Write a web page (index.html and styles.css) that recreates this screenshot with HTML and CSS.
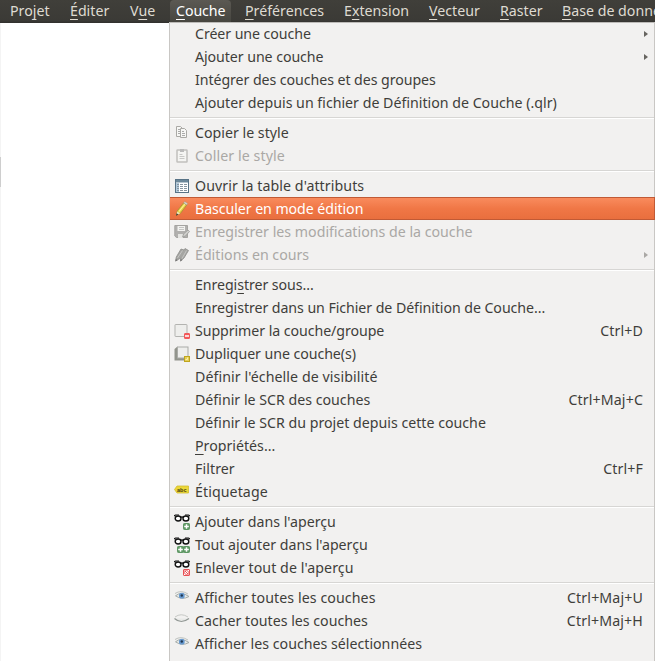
FILE: index.html
```
<!DOCTYPE html>
<html lang="fr">
<head>
<meta charset="utf-8">
<title>Couche</title>
<link rel="stylesheet" href="styles.css">
</head>
<body>
<svg class="defs" width="0" height="0">
  <defs>
    <symbol id="glasses" viewBox="0 0 16 16">
      <path d="M0 2 1.500 1H5M16 2 14.500 1H11" fill="none" stroke="#111" stroke-width="1.200"/>
      <ellipse cx="4.100" cy="4.500" rx="2.900" ry="2.500" fill="#fff" stroke="#111" stroke-width="1.400"/>
      <ellipse cx="11.900" cy="4.500" rx="2.900" ry="2.500" fill="#fff" stroke="#111" stroke-width="1.400"/>
      <path d="M6.500 3.500Q8 2.300 9.500 3.500" fill="none" stroke="#111" stroke-width="1.400"/>
    </symbol>
    <symbol id="plus" viewBox="0 0 7 7">
      <rect x=".5" y=".5" width="6" height="6" rx=".8" fill="#5f9864" stroke="#5c9762"/>
      <path d="M3.500 1.200v4.600M1.200 3.500h4.600" stroke="#fff" stroke-width="1.500"/>
    </symbol>
    <symbol id="eye" viewBox="0 0 16 16">
      <path d="M1.500 5.800Q7 1 15 6.500 8 10.500 1.500 5.800Z" fill="#e9ecea" stroke="#a4aaa7" stroke-width="1"/>
      <path d="M1 3.500Q7-.5 14 4" fill="none" stroke="#b7bbb8" stroke-width=".9"/>
      <circle cx="7.800" cy="5.700" r="2.900" fill="#6799cf"/>
      <circle cx="7.800" cy="5.500" r="1.200" fill="#20364f"/>
    </symbol>
  </defs>
</svg>
<nav class="menubar">
  <span class="tab t1">Pro<u>j</u>et</span><span class="tab t2"><u>É</u>diter</span><span class="tab t3">V<u>u</u>e</span><span class="tab t4 active tight"><u>C</u>ouche</span><span class="tab t5"><u>P</u>références</span><span class="tab t6">E<u>x</u>tension</span><span class="tab t7"><u>V</u>ecteur</span><span class="tab t8"><u>R</u>aster</span><span class="tab t9"><u>B</u>ase de données</span>
</nav>
<main class="content">
<div class="handle"></div>
<div class="menu">
  <div class="row tight"><i class="icon"></i><span class="label">Créer une couche</span><b class="arrow"></b></div>
  <div class="row tight"><i class="icon"></i><span class="label">Ajouter une couche</span><b class="arrow"></b></div>
  <div class="row tight"><i class="icon"></i><span class="label">Intégrer des couches et des groupes</span></div>
  <div class="row"><i class="icon"></i><span class="label">Ajouter depuis un fichier de Définition de Couche (.qlr)</span></div>
  <hr>
  <div class="row"><svg class="icon" viewBox="0 0 16 16"><path d="M2.500 1.500h4l2 2v8h-6z" fill="#f7f7f5" stroke="#aaa9a5"/><path d="M6.500 3.500h4l2 2v7h-6z" fill="#f7f7f5" stroke="#aaa9a5"/><path d="M4 4.500h2M4 6.500h2M4 8.500h2M8 6.500h2M8 8.500h3M8 10.500h3" stroke="#aaa"/></svg><span class="label">Copier le style</span></div>
  <div class="row disabled loose"><svg class="icon" viewBox="0 0 16 16"><rect x="3" y="2" width="10" height="12" rx=".5" fill="#f5f5f3" stroke="#c1c0bd" stroke-width="1.500"/><path d="M6 1h4v3H6z" fill="#bbb"/><path d="M5.500 6.500h3M5.500 8.500h5M5.500 10.500h5" stroke="#c8c8c6"/></svg><span class="label">Coller le style</span></div>
  <hr>
  <div class="row loose"><svg class="icon" viewBox="0 0 16 16"><rect x="1.500" y="1.500" width="13" height="13" fill="#fff" stroke="#587386"/><path d="M2 2h12v2.500H2z" fill="#6b8799"/><path d="M2 5h3v9H2z" fill="#b3cadb"/><path d="M3 6.500h2M6 6.500h3M10 6.500h3M3 8.500h2M6 8.500h3M10 8.500h3M3 10.500h2M6 10.500h3M10 10.500h3M3 12.500h2M6 12.500h3M10 12.500h3" stroke="#8795a0"/></svg><span class="label">Ouvrir la table d'attributs</span></div>
  <div class="row selected tight"><svg class="icon" viewBox="0 0 16 16"><path d="m2.500 14 .7-4L9.500 2l3.200 2L6.500 12.300z" fill="#e5cf42" stroke="#a78e34" stroke-width=".8"/><path d="m5 10.500 6-7.500" stroke="#fff09a" stroke-width="1.200"/><path d="m9.500 2 1.300-1.500 2.900 2-1 1.500z" fill="#d6d6ce" stroke="#a3937b" stroke-width=".5"/><path d="m2.500 14 .7-3.500 3 2z" fill="#eee3bf"/><path d="m2 14.800.6-2.500 1.700 1.200z" fill="#333"/></svg><span class="label">Basculer en mode édition</span></div>
  <div class="row disabled"><svg class="icon" viewBox="0 0 16 16"><path d="M.8 1.500h12.700v12H2.500L.8 12z" fill="#b1b0ae" stroke="#a5a4a1"/><path d="M3.500 2h7.500v5H3.500z" fill="#f2f2f0"/><path d="M4 10h5v4H4z" fill="#e5e5e2"/><path d="M5 3.500h5M5 5.500h5" stroke="#c5c5c3"/><path d="m8.500 13 1-3 4.500-4 1.500 1.500-4 4.500z" fill="#cececb" stroke="#969693" stroke-width=".7"/></svg><span class="label">Enregistrer les modifications de la couche</span></div>
  <div class="row disabled"><svg class="icon" viewBox="0 0 16 16"><path d="m1.500 14 .8-4L7 2l3 1 1-1.500 3.500 2L10 11l-3.500 3 .2-3z" fill="#a5a5a2" stroke="#8d8d8a" stroke-width=".8"/><path d="m3.500 11 5-7.500M8 11.500l4.500-8" stroke="#c4c4c2"/><path d="m1.500 14.500.4-2.500 1.800 1.200zM6.200 14.500l.5-2.500L8.500 13z" fill="#777"/></svg><span class="label">Éditions en cours</span><b class="arrow"></b></div>
  <hr>
  <div class="row tight"><i class="icon"></i><span class="label">Enregi<u>s</u>trer sous...</span></div>
  <div class="row tight"><i class="icon"></i><span class="label">Enregistrer dans un Fichier de Définition de Couche...</span></div>
  <div class="row tight"><svg class="icon" viewBox="0 0 16 16"><rect x="1" y="1.500" width="12" height="12" rx=".5" fill="#eeeeec" stroke="#b3b3b0"/><rect x="10.500" y="10.500" width="5" height="5" rx=".5" fill="#f35a5a" stroke="#f0595b"/><path d="M11 13h4" stroke="#fff" stroke-width="1.500"/></svg><span class="label">Supprimer la couche/groupe</span><span class="key">Ctrl+D</span></div>
  <div class="row tight"><svg class="icon" viewBox="0 0 16 16"><path d="M.500 3 3.500.5v11H13l-2 3H.500z" fill="#92948c"/><rect x="3.500" y="1" width="10.500" height="11" fill="#eeeeec" stroke="#aaaba7"/><rect x="10.500" y="10.500" width="5" height="5" fill="#e5ce55" stroke="#bfa51d"/><path d="M11.500 13.500h2v-2" fill="none" stroke="#fff2a6"/></svg><span class="label">Dupliquer une couche(s)</span></div>
  <div class="row loose"><i class="icon"></i><span class="label">Définir l'échelle de visibilité</span></div>
  <div class="row"><i class="icon"></i><span class="label">Définir le SCR des couches</span><span class="key">Ctrl+Maj+C</span></div>
  <div class="row"><i class="icon"></i><span class="label">Définir le SCR du projet depuis cette couche</span></div>
  <div class="row"><i class="icon"></i><span class="label"><u>P</u>ropriétés...</span></div>
  <div class="row loose"><i class="icon"></i><span class="label">Filtrer</span><span class="key">Ctrl+F</span></div>
  <div class="row loose"><svg class="icon" viewBox="0 0 16 16"><path d="M.5 5.500 3 2h11.500v7H3z" fill="#ecd738" stroke="#d2bc30" stroke-width=".8"/><text class="abc" x="3" y="7.700">abc</text></svg><span class="label">Étiquetage</span></div>
  <hr>
  <div class="row"><svg class="icon" viewBox="0 0 16 16"><use href="#glasses" width="16" height="16"/><use href="#plus" x="9" y="9" width="7" height="7"/></svg><span class="label">Ajouter dans l'aperçu</span></div>
  <div class="row"><svg class="icon" viewBox="0 0 16 16"><use href="#glasses" width="16" height="16"/><use href="#plus" x="3" y="9" width="7" height="7"/><use href="#plus" x="9" y="9" width="7" height="7"/></svg><span class="label">Tout ajouter dans l'aperçu</span></div>
  <div class="row loose"><svg class="icon" viewBox="0 0 16 16"><use href="#glasses" width="16" height="16"/><rect x="9.500" y="9.500" width="6" height="6" rx=".5" fill="#fff" stroke="#e95055"/><path d="m10.500 10.500 4 4" stroke="#e95055" stroke-width="1"/><circle cx="12.500" cy="12.500" r="2" fill="none" stroke="#e95055" stroke-width=".8"/></svg><span class="label">Enlever tout de l'aperçu</span></div>
  <hr>
  <div class="row loose"><svg class="icon" viewBox="0 0 16 16"><use href="#eye" width="16" height="16"/></svg><span class="label">Afficher toutes les couches</span><span class="key">Ctrl+Maj+U</span></div>
  <div class="row"><svg class="icon" viewBox="0 0 16 16"><path d="M1 4Q7-.5 14 4" fill="none" stroke="#c6c8c5"/><path d="M.500 5.500Q7 11.500 15 5.500" fill="#e8e9e7" stroke="#929895" stroke-width="1.200"/></svg><span class="label">Cacher toutes les couches</span><span class="key">Ctrl+Maj+H</span></div>
  <div class="row"><svg class="icon" viewBox="0 0 16 16"><use href="#eye" width="16" height="16"/></svg><span class="label">Afficher les couches sélectionnées</span></div>
</div>
</main>
</body>
</html>
```
FILE: styles.css
```
* { box-sizing: border-box; }
body {
  margin: 0;
  width: 655px;
  height: 661px;
  overflow: hidden;
  background: #fff;
  color: #3f3e3a;
  font: 14.2px/23px "Noto Sans", "Open Sans", sans-serif;
}
.defs { display: block; }
u {
  text-decoration: underline;
  text-decoration-thickness: 1px;
  text-underline-offset: 3px;
  text-decoration-skip-ink: none;
}
.menubar {
  display: flex;
  height: 23px;
  overflow: hidden;
  background: linear-gradient(#403f3a, #3b3a36 90%, #302f2c);
  color: #dfdbd2;
  white-space: nowrap;
}
.tab { flex: none; padding-left: 10px; line-height: 22px; }
.t1, .t2 { width: 60px; }
.t3 { width: 50px; }
.t4 { width: 61px; padding-left: 6px; }
.t5 { width: 103px; padding-left: 14px; }
.t6 { width: 85px; }
.t7 { width: 71px; }
.t8 { width: 62px; }
.t9 { width: 130px; }
.active {
  border-radius: 4px 4px 0 0;
  background: linear-gradient(#5b5953, #46453f);
  color: #fff;
}
.content {
  display: flex;
  height: 638px;
  border-left: 1px solid #f4f4f4;
}
.handle { width: 169px; height: 30px; margin: 134px 0 0 -1px; border-left: 1px solid #cecece; }
.menu {
  position: relative;
  flex: none;
  width: 486px;
  height: 639px;
  margin-top: -1px;
  border: solid #c9c7c4;
  border-width: 0 1px;
  background: #f2f1f0;
  box-shadow: inset 0 1px #bdbbb8;
}
.row {
  display: flex;
  align-items: center;
  height: 23px;
  padding: 0 11px 0 4px;
  white-space: nowrap;
}
.tight { letter-spacing: -.07px; }
.loose { letter-spacing: .08px; }
.icon { flex: none; width: 16px; height: 16px; margin-right: 5px; }
.label { flex: 1; }
.key { letter-spacing: .13px; }
.arrow {
  margin-right: -5px;
  border: solid transparent;
  border-width: 3px 0 3px 4px;
  border-left-color: #66645f;
}
.disabled { color: #aaa8a5; }
.disabled .arrow { border-left-color: #aaa8a5; }
.selected {
  margin: 0 -1px 0 0;
  padding-left: 4px;
  border: solid #c15a35;
  border-width: 1px 1px 1px 0;
  background: linear-gradient(#f98b5d, #f07746 50%, #e96f3e);
  color: #fff;
}
hr {
  height: 7px;
  margin: 0;
  border: 0;
  background: linear-gradient(#d7d6d4, #d7d6d4) 0 3px / 100% 1px no-repeat, linear-gradient(#fff, #fff) 0 4px / 100% 1px no-repeat;
}
.abc { font: bold 5.500px "Liberation Sans", sans-serif; letter-spacing: 0; fill: #463d12; }
```
